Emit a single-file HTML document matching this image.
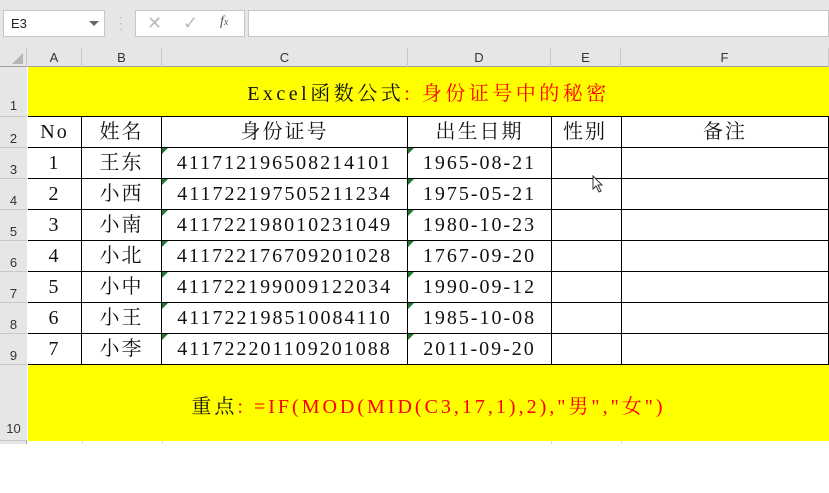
<!DOCTYPE html>
<html><head><meta charset="utf-8"><style>
*{margin:0;padding:0;box-sizing:border-box}
body{width:829px;height:444px;overflow:hidden;background:#fff;position:relative;font-family:"Liberation Sans",sans-serif}
.a{position:absolute}
.t{font-family:"Liberation Serif","Noto Serif CJK SC",serif;font-size:20px;letter-spacing:2px;color:#111;white-space:nowrap;position:absolute;text-align:center;line-height:31px}
.hl{position:absolute;background:#000;height:1px}
.vl{position:absolute;background:#000;width:1px}
.ch{position:absolute;top:48px;height:19px;font-size:13px;color:#333;text-align:center;line-height:20px;border-right:1px solid #c8c8c8}
.rh{position:absolute;left:0;width:27px;font-size:13px;color:#333;text-align:center;border-bottom:1px solid #c8c8c8;background:#e6e6e6}
.tri{position:absolute;width:0;height:0;border-top:6px solid #1d7a2e;border-right:6px solid transparent}
</style></head><body>
<div class="a" style="left:0;top:0;width:829px;height:48px;background:#e6e6e6"></div>
<div class="a" style="left:3px;top:10px;width:102px;height:27px;background:#fff;border:1px solid #c6c6c6;font-size:13px;line-height:25px;padding-left:7px;color:#222">E3</div>
<div class="a" style="left:89px;top:21px;width:0;height:0;border-left:5px solid transparent;border-right:5px solid transparent;border-top:5px solid #666"></div>
<div class="a" style="left:119px;top:14px;color:#aaa;font-size:12px;line-height:6px">·<br>·<br>·</div>
<div class="a" style="left:135px;top:10px;width:110px;height:27px;background:#fff;border:1px solid #c6c6c6"></div>
<div class="a" style="left:147px;top:13px;color:#bbb;font-size:18px">✕</div>
<div class="a" style="left:183px;top:13px;color:#bbb;font-size:18px">✓</div>
<div class="a" style="left:220px;top:14px;color:#555;font-size:14px;font-style:italic;font-family:'Liberation Serif',serif">f<span style="font-size:10px">x</span></div>
<div class="a" style="left:248px;top:10px;width:581px;height:27px;background:#fff;border:1px solid #c6c6c6"></div>
<div class="a" style="left:0;top:48px;width:829px;height:19px;background:#e6e6e6;border-bottom:1px solid #a0a0a0"></div>
<div class="a" style="left:12px;top:53px;width:0;height:0;border-left:11px solid transparent;border-bottom:11px solid #b5b5b5"></div>
<div class="ch" style="left:0;width:27px"></div>
<div class="ch" style="left:27px;width:55px">A</div>
<div class="ch" style="left:82px;width:80px">B</div>
<div class="ch" style="left:162px;width:246px">C</div>
<div class="ch" style="left:408px;width:143px">D</div>
<div class="ch" style="left:551px;width:70px">E</div>
<div class="ch" style="left:621px;width:208px">F</div>
<div class="a" style="left:0;top:67px;width:27px;height:377px;background:#e6e6e6;border-right:1px solid #a0a0a0"></div>
<div class="rh" style="top:67px;height:50px;line-height:78px">1</div>
<div class="rh" style="top:117px;height:31px;line-height:44px">2</div>
<div class="rh" style="top:148px;height:31px;line-height:44px">3</div>
<div class="rh" style="top:179px;height:31px;line-height:44px">4</div>
<div class="rh" style="top:210px;height:31px;line-height:44px">5</div>
<div class="rh" style="top:241px;height:31px;line-height:44px">6</div>
<div class="rh" style="top:272px;height:31px;line-height:44px">7</div>
<div class="rh" style="top:303px;height:31px;line-height:44px">8</div>
<div class="rh" style="top:334px;height:31px;line-height:44px">9</div>
<div class="rh" style="top:365px;height:76px;line-height:128px">10</div>
<div class="a" style="left:28px;top:67px;width:801px;height:49px;background:#ff0"></div>
<div class="a" style="left:28px;top:365px;width:801px;height:76px;background:#ff0"></div>
<div class="a" style="left:82px;top:441px;width:1px;height:3px;background:#d4d4d4"></div>
<div class="a" style="left:162px;top:441px;width:1px;height:3px;background:#d4d4d4"></div>
<div class="a" style="left:551px;top:441px;width:1px;height:3px;background:#d4d4d4"></div>
<div class="a" style="left:621px;top:441px;width:1px;height:3px;background:#d4d4d4"></div>
<div class="t" style="left:28px;top:79px;width:801px;letter-spacing:3.5px"><span>Excel函数公式</span><span style="color:#f00">: 身份证号中的秘密</span></div>
<div class="t" style="left:28px;top:392px;width:801px;letter-spacing:3px"><span>重点</span><span style="color:#f00">: =IF(MOD(MID(C3,17,1),2),"男","女")</span></div>
<div class="hl" style="left:28px;top:116px;width:801px"></div>
<div class="hl" style="left:28px;top:147px;width:801px"></div>
<div class="hl" style="left:28px;top:178px;width:801px"></div>
<div class="hl" style="left:28px;top:209px;width:801px"></div>
<div class="hl" style="left:28px;top:240px;width:801px"></div>
<div class="hl" style="left:28px;top:271px;width:801px"></div>
<div class="hl" style="left:28px;top:302px;width:801px"></div>
<div class="hl" style="left:28px;top:333px;width:801px"></div>
<div class="hl" style="left:28px;top:364px;width:801px"></div>
<div class="vl" style="left:81px;top:116px;height:249px"></div>
<div class="vl" style="left:161px;top:116px;height:249px"></div>
<div class="vl" style="left:407px;top:116px;height:249px"></div>
<div class="vl" style="left:551px;top:116px;height:249px"></div>
<div class="vl" style="left:621px;top:116px;height:249px"></div>
<div class="vl" style="left:828px;top:116px;height:249px"></div>
<div class="t" style="left:28px;top:117px;width:53px">No</div>
<div class="t" style="left:82px;top:117px;width:79px">姓名</div>
<div class="t" style="left:162px;top:117px;width:245px">身份证号</div>
<div class="t" style="left:408px;top:117px;width:143px">出生日期</div>
<div class="t" style="left:552px;top:117px;width:69px;text-align:left;padding-left:11px">性别</div>
<div class="t" style="left:622px;top:117px;width:206px">备注</div>
<div id="rows"></div>
<script>
var d=[["1","王东","411712196508214101","1965-08-21"],["2","小西","411722197505211234","1975-05-21"],["3","小南","411722198010231049","1980-10-23"],["4","小北","411722176709201028","1767-09-20"],["5","小中","411722199009122034","1990-09-12"],["6","小王","411722198510084110","1985-10-08"],["7","小李","411722201109201088","2011-09-20"]];
var h="";
d.forEach(function(r,i){var y=148+31*i;
h+='<div class="t" style="left:28px;top:'+y+'px;width:53px">'+r[0]+'</div>';
h+='<div class="t" style="left:82px;top:'+y+'px;width:79px">'+r[1]+'</div>';
h+='<div class="t" style="left:162px;top:'+y+'px;width:245px">'+r[2]+'</div>';
h+='<div class="t" style="left:408px;top:'+y+'px;width:143px">'+r[3]+'</div>';
h+='<div class="tri" style="left:162px;top:'+y+'px"></div><div class="tri" style="left:408px;top:'+y+'px"></div>';
});
document.getElementById("rows").innerHTML=h;
</script>
<svg class="a" style="left:592px;top:175px" width="12" height="18" viewBox="0 0 12 18"><path d="M1 1 L1 14 L4 11 L7 17 L9 16 L6 10 L10 10 Z" fill="#fff" stroke="#333" stroke-width="1"/></svg>
</body></html>
